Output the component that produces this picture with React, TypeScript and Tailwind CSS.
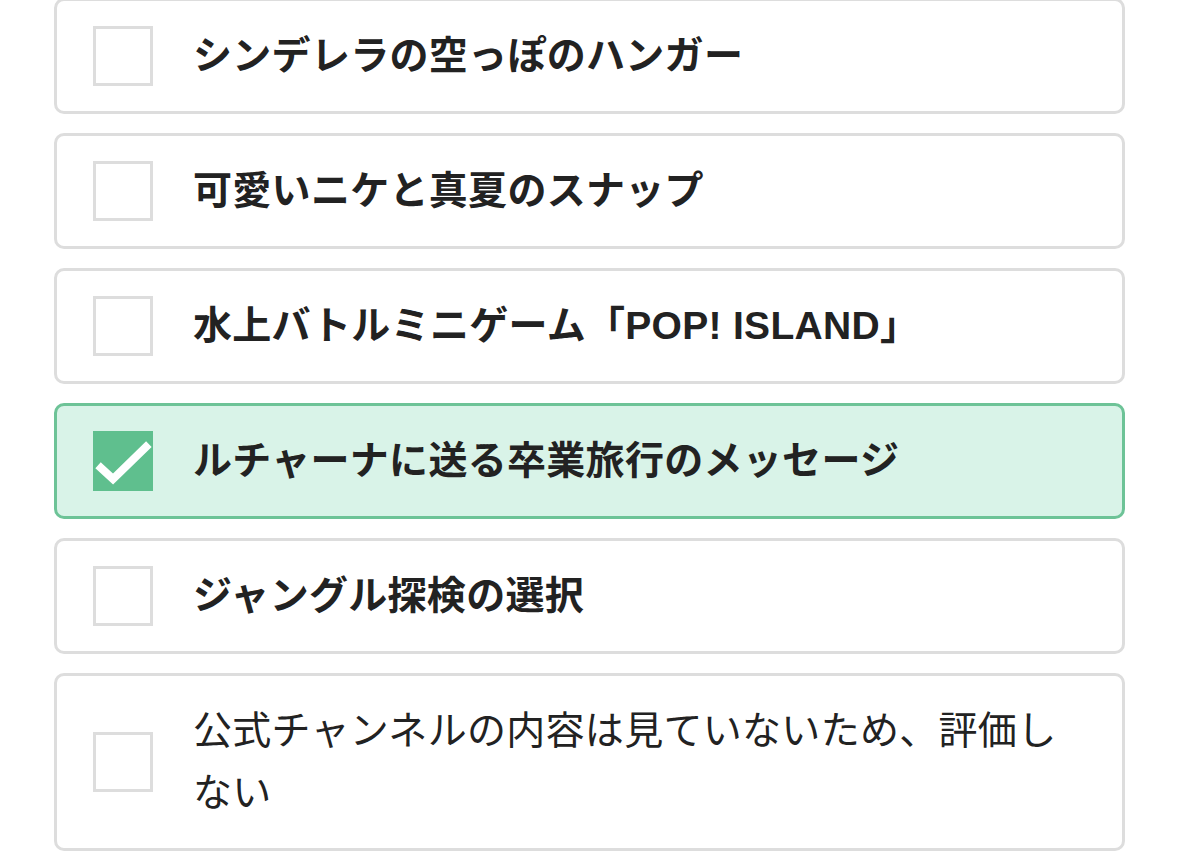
import React from "react";

const items: { label: string; checked?: boolean; bold?: boolean }[] = [
  { label: "シンデレラの空っぽのハンガー", bold: true },
  { label: "可愛いニケと真夏のスナップ", bold: true },
  { label: "水上バトルミニゲーム「POP! ISLAND」", bold: true },
  { label: "ルチャーナに送る卒業旅行のメッセージ", bold: true, checked: true },
  { label: "ジャングル探検の選択", bold: true },
  { label: "公式チャンネルの内容は見ていないため、評価しない" },
];

export default function App() {
  return (
    <div
      className="w-[1179px] h-[857px] overflow-hidden bg-white"
      style={{ fontFamily: '"Liberation Sans", "Noto Sans CJK JP", sans-serif' }}
    >
      <div className="-mt-[2px] px-[54px] flex flex-col gap-[19px]">
        {items.map((it, i) => (
          <div
            key={i}
            className={
              it.checked
                ? "flex items-center border-[3px] border-[#6dc397] bg-[#d9f3e8] rounded-[10px] pl-[36px] pr-[36px] py-[24px]"
                : "flex items-center border-[3px] border-[#dddddd] bg-white rounded-[10px] pl-[36px] pr-[36px] py-[24px]"
            }
          >
            {it.checked ? (
              <div className="w-[60px] h-[60px] shrink-0 bg-[#5fbf8e] flex items-center justify-center">
                <svg width="60" height="60" viewBox="0 0 60 60">
                  <path
                    d="M8 37 L20 48 L53 16"
                    fill="none"
                    stroke="white"
                    strokeWidth="8"
                    strokeLinecap="square"
                  />
                </svg>
              </div>
            ) : (
              <div className="w-[60px] h-[60px] shrink-0 border-[3px] border-[#dddddd] bg-white" />
            )}
            <div
              className={
                (it.bold ? "font-bold " : "font-normal ") +
                "ml-[40px] text-[39px] leading-[62px] tracking-[0.3px] text-[#222222]"
              }
            >
              {it.label}
            </div>
          </div>
        ))}
      </div>
    </div>
  );
}
